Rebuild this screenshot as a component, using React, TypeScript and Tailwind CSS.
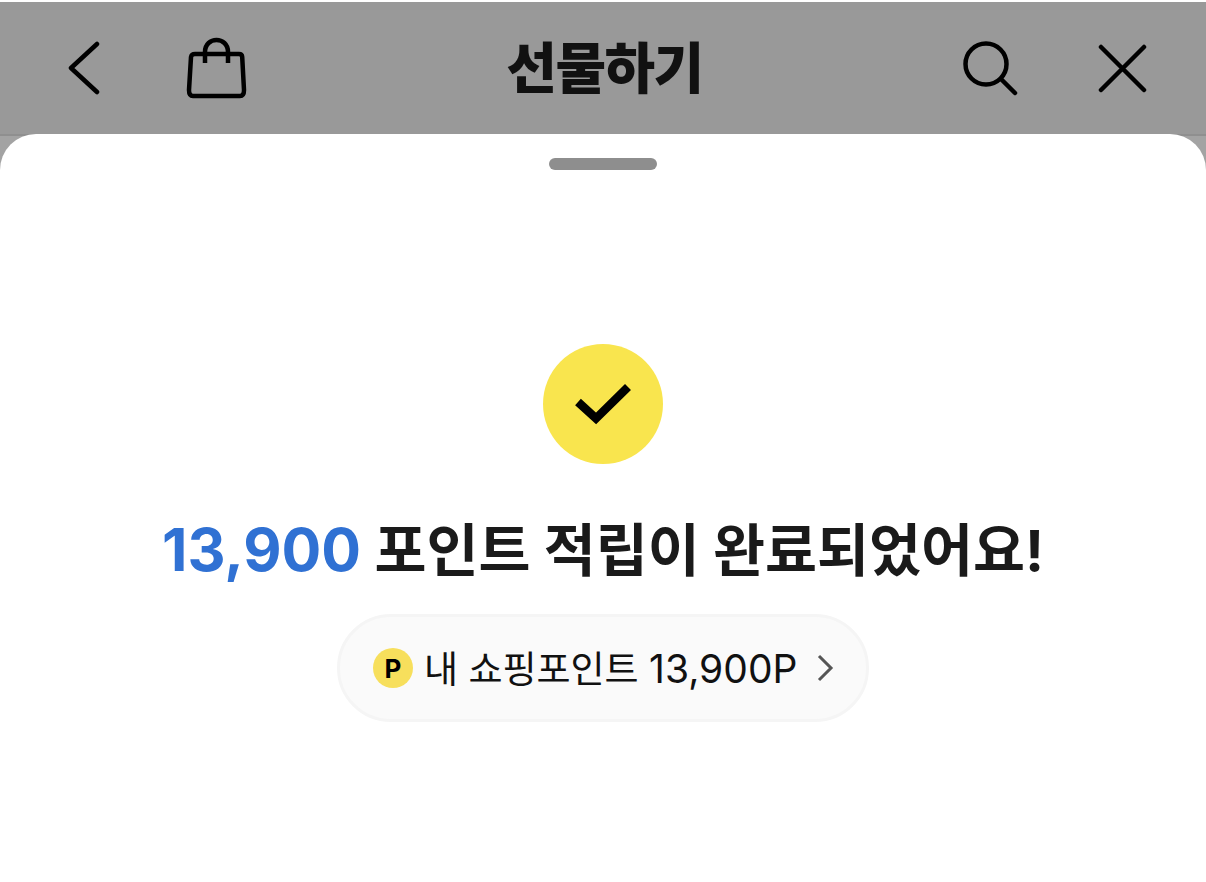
export default function App() {
  return (
    <div className="w-[1206px] h-[882px] overflow-hidden bg-white flex flex-col font-['Inter','Noto_Sans_CJK_KR',sans-serif]">
      <header className="h-[132px] shrink-0 mt-[2px] bg-[#999999] flex items-center pl-[68px] pr-[59px]">
        <svg width="32" height="54" viewBox="0 0 32 54" fill="none" stroke="#000" strokeWidth="4.500" strokeLinecap="round" strokeLinejoin="round" className="-mt-[1px]">
          <path d="M29 3 L3 27 L29 51" />
        </svg>
        <svg width="62" height="62" viewBox="0 0 62 62" fill="none" stroke="#000" strokeWidth="4.500" strokeLinejoin="round" className="ml-[86px]">
          <path d="M9 17 H53 Q56 17 56.200 20 L58 53 Q58 59 54 59 H7 Q3 59 3 53 L5 20 Q5.500 17 9 17 Z" />
          <path d="M19 26 V15 C19 -1 42 -1 42 15 V26" />
        </svg>
        <h1 className="flex-1 text-center text-[55px] leading-none font-black text-[#111] tracking-[-1.500px] pr-[5px]">선물하기</h1>
        <svg width="56" height="56" viewBox="0 0 56 56" fill="none" stroke="#000" strokeWidth="4.500" strokeLinecap="round" className="-ml-[4px]">
          <circle cx="24" cy="24" r="20.500" />
          <path d="M39 39 L53 53" />
        </svg>
        <svg width="49" height="49" viewBox="0 0 49 49" fill="none" stroke="#000" strokeWidth="4.500" strokeLinecap="round" className="ml-[80px]">
          <path d="M3 3 L46 46 M46 3 L3 46" />
        </svg>
      </header>
      <div className="flex-1 bg-[#a3a3a3] border-t-2 border-[#8f8f8f]">
        <main className="-mt-[2px] h-[calc(100%+2px)] bg-white rounded-t-[36px] flex flex-col items-center">
          <div className="mt-[24px] w-[108px] h-[12px] rounded-full bg-[#8e8e8e]" />
          <div className="mt-[174px] w-[120px] h-[120px] rounded-full bg-[#f9e54e] flex items-center justify-center">
            <svg width="56" height="42" viewBox="0 0 56 42" fill="none" stroke="#000" strokeWidth="8.500">
              <path d="M3 19 L21 35.500 L53 4" />
            </svg>
          </div>
          <h2 className="mt-[52px] text-[56.500px] leading-[68px] font-bold text-[#1a1a1a] whitespace-nowrap">
            <span className="text-[59px] text-[#3071d3]">13,900</span> 포인트 적립이 완료되었어요!
          </h2>
          <a className="mt-[29px] w-[532px] h-[108px] rounded-full bg-[#fafafa] border-[3px] border-[#f5f5f5] flex items-center pl-[33px]">
            <span className="w-[40px] h-[40px] rounded-full bg-[#f7df5c] flex items-center justify-center text-[26px] font-bold text-black">P</span>
            <span className="ml-[11px] text-[37px] leading-none text-[#111] whitespace-nowrap">
              내 쇼핑포인트 <span className="text-[39px]">13,900P</span>
            </span>
            <svg width="18" height="28" viewBox="0 0 18 28" fill="none" stroke="#555" strokeWidth="3" className="ml-[19px]">
              <path d="M3 2 L15 14 L3 26" />
            </svg>
          </a>
        </main>
      </div>
    </div>
  );
}
